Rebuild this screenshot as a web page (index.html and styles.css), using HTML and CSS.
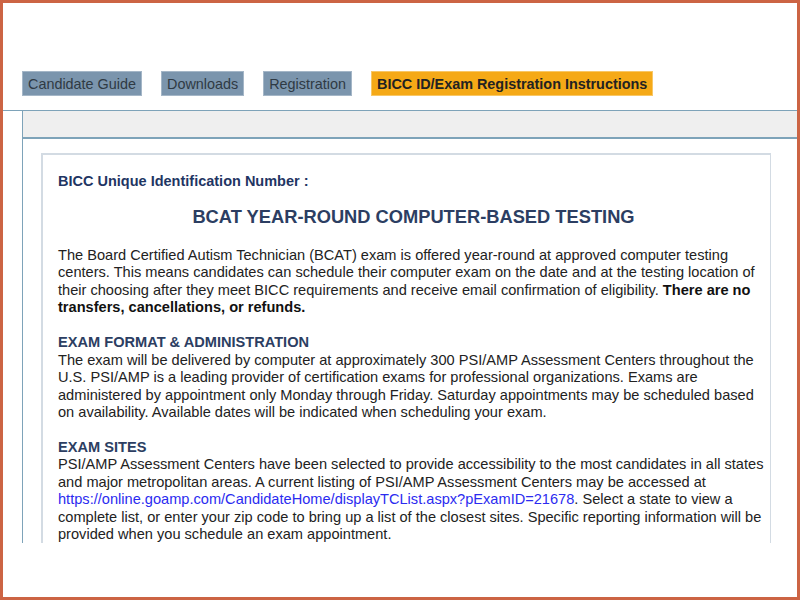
FILE: index.html
```html
<!doctype html>
<html lang="en">
<head>
    <meta charset="UTF-8">
    <title>BICC ID/Exam Registration Instructions</title>
    <link rel="stylesheet" href="styles.css">
</head>
<body>
<div class="frame">
    <ul class="tabs">
        <li><a href="#">Candidate Guide</a></li>
        <li><a href="#">Downloads</a></li>
        <li><a href="#">Registration</a></li>
        <li class="active"><a href="#">BICC ID/Exam Registration Instructions</a></li>
    </ul>
    <div class="panel">
        <div class="bar"></div>
        <div class="body">
            <div class="box">
                <p class="uid">BICC Unique Identification Number :</p>
                <h1>BCAT YEAR-ROUND COMPUTER-BASED TESTING</h1>
                <p class="text">
                    The Board Certified Autism Technician (BCAT) exam is offered year-round at approved computer testing centers. This means candidates can schedule their computer exam on the date and at the testing location of their choosing after they meet BICC requirements and receive email confirmation of eligibility. <b>There are no transfers, cancellations, or refunds.</b><br><br>
                    <span class="sub">EXAM FORMAT &amp; ADMINISTRATION</span><br>
                    The exam will be delivered by computer at approximately 300 PSI/AMP Assessment Centers throughout the U.S. PSI/AMP is a leading provider of certification exams for professional organizations. Exams are administered by appointment only Monday through Friday. Saturday appointments may be scheduled based on availability. Available dates will be indicated when scheduling your exam.<br><br>
                    <span class="sub">EXAM SITES</span><br>
                    PSI/AMP Assessment Centers have been selected to provide accessibility to the most candidates in all states and major metropolitan areas. A current listing of PSI/AMP Assessment Centers may be accessed at <a href="#">https://online.goamp.com/CandidateHome/displayTCList.aspx?pExamID=21678</a>. Select a state to view a complete list, or enter your zip code to bring up a list of the closest sites. Specific reporting information will be provided when you schedule an exam appointment.
                </p>
            </div>
        </div>
    </div>
</div>
</body>
</html>
```

FILE: styles.css
```css
* {
    margin: 0;
    padding: 0;
    list-style: none;
    box-sizing: border-box;
}

body {
    font-family: "Liberation Sans", Arial, sans-serif;
    color: #222;
    background: #fff;
}

.frame {
    width: 800px;
    height: 600px;
    border: 3px solid #cc6444;
    overflow: hidden;
}

.tabs {
    display: flex;
    gap: 19px;
    padding: 68px 0 0 19px;
    height: 107px;
}

.tabs li {
    height: 25px;
}

.tabs a {
    display: block;
    height: 25px;
    line-height: 24px;
    padding: 0 5px;
    font-size: 14.4px;
    color: #2f3a44;
    text-decoration: none;
    background: #7b95ad;
    border: 1px solid #a4b6c7;
}

.tabs .active a {
    background: #f5a917;
    border-color: #f8c766;
    color: #222;
    font-weight: bold;
}

.panel {
    border-top: 1px solid #7ea3b9;
    height: 433px;
    overflow: hidden;
}

.bar {
    margin-left: 19px;
    height: 28px;
    background: #efefef;
    border-left: 1px solid #7ea3b9;
    border-bottom: 2px solid #7ea3b9;
}

.body {
    margin-left: 19px;
    border-left: 1px solid #7ea3b9;
    height: 420px;
    padding: 14px 0 0 18px;
}

.box {
    width: 730px;
    height: 420px;
    border: 1px solid #d3dbe3;
    border-left-width: 2px;
    border-top-width: 2px;
    padding: 18px 4px 0 15px;
}

.uid {
    font-size: 14.5px;
    font-weight: bold;
    color: #1f3563;
}

h1 {
    margin: 17px 0 19px;
    font-size: 18.3px;
    text-align: center;
    color: #2c3e62;
    padding-left: 3px;
}

.text {
    font-size: 14.6px;
    line-height: 17.45px;
}

.text b {
    color: #111;
}

.sub {
    font-weight: bold;
    color: #2c3e62;
}

.text a {
    color: #2b2bf0;
    text-decoration: none;
}
```
